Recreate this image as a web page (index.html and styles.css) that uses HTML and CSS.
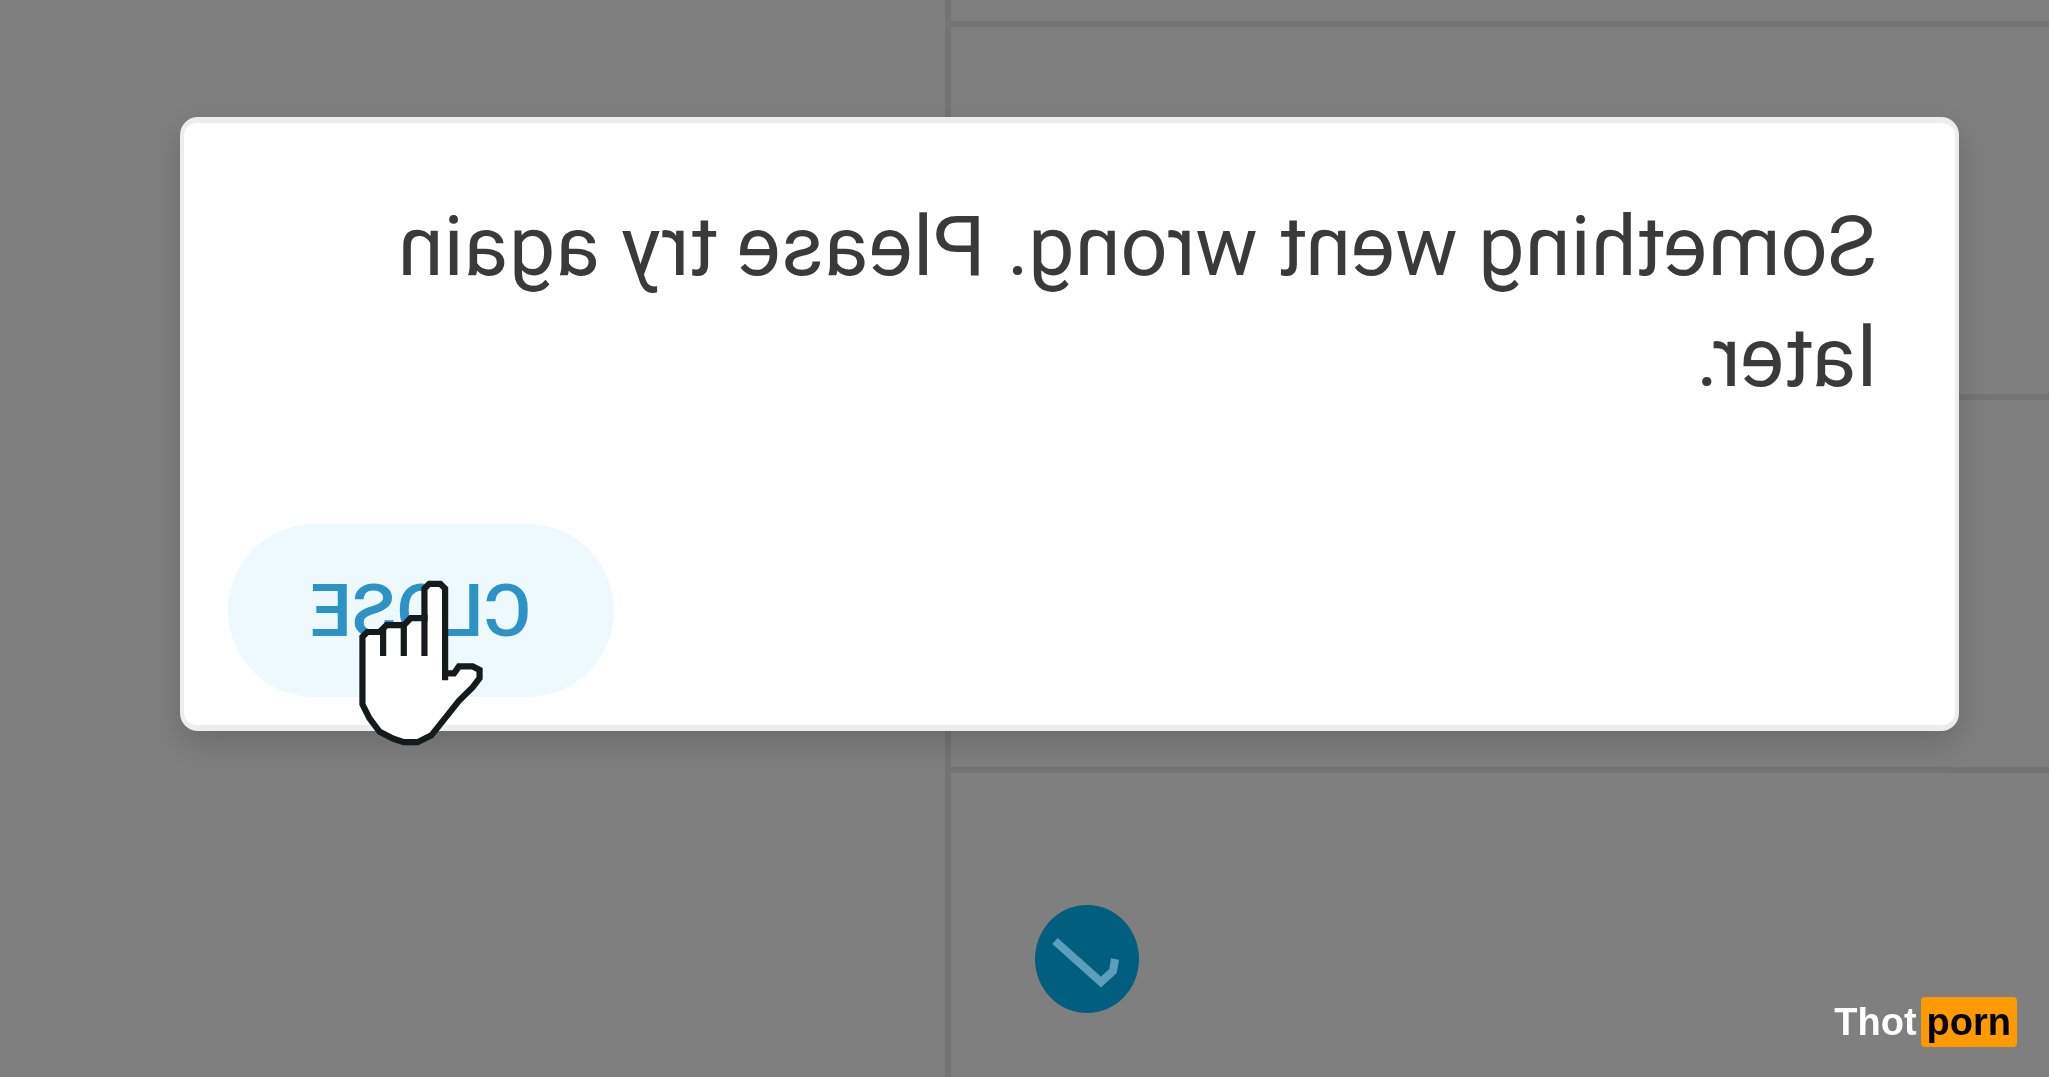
FILE: index.html
```html
<!DOCTYPE html>
<html lang="en">

<head>
    <meta charset="UTF-8">
    <meta name="viewport" content="width=device-width, initial-scale=1.0">
    <title>Something went wrong</title>
    <link rel="stylesheet" href="styles.css">
</head>

<body>

    <div class="screen">
        <main class="rows">
            <div class="row row-first"></div>
            <div class="row"></div>
            <div class="row"></div>
            <div class="row row-last">
                <svg class="check" viewBox="0 0 104 108" aria-hidden="true">
                    <ellipse cx="52" cy="54" rx="52" ry="54" fill="#005f7e" />
                    <path d="M24 54 L26 66 L38 77 L84 36" fill="none" stroke="#5c9ebc" stroke-width="8" />
                </svg>
            </div>
        </main>
        <aside class="side"></aside>

        <div class="overlay">
            <div class="dialog" role="alertdialog" aria-labelledby="message">
                <p class="message" id="message">Something went wrong. Please try again later.</p>
                <div class="actions">
                    <button class="close-btn" type="button">CLOSE</button>
                    <svg class="cursor" viewBox="0 0 18 24" aria-hidden="true">
                        <path d="M5.5 14.5 V1.2 L6.2 .5 H7.8 L8.5 1.2 V5.5 H10.5 L11.5 6.5 H14 L15 7.5 H16.8 L17.5 8.2 V18 L16.5 20 L15 22 L13 23 L11.5 23.5 H9.5 L7.5 22.5 L5.5 20 L3.5 17.5 L1.5 15.5 L.5 14.2 V13 L1.5 12.5 H3.5 L4.2 13.5 H5.5" fill="#fff" stroke="#151a1d" stroke-width=".9" />
                        <path d="M8.5 5 V11 M11.5 6.5 V11 M14.5 7 V11" fill="none" stroke="#151a1d" stroke-width=".9" />
                    </svg>
                </div>
            </div>
        </div>
    </div>

    <div class="watermark">Thot<span class="tag">porn</span></div>

</body>

</html>
```

FILE: styles.css
```css
* {
    box-sizing: border-box;
    margin: 0;
    padding: 0;
}

body {
    min-height: 100vh;
    background-color: #7f7f7f;
    font-family: Roboto, Arial, sans-serif;
}

/* the whole view is shown mirrored */
.screen {
    position: relative;
    display: flex;
    min-height: 100vh;
    transform: scaleX(-1);
}

.rows {
    display: flex;
    flex-direction: column;
    width: 53.9%;
    border-right: 6px solid #747474;
}

.side {
    flex: 1;
}

.row {
    height: 373px;
    border-bottom: 6px solid #747474;
}

.row-first {
    height: 27px;
}

.row-last {
    display: flex;
    flex: 1;
    justify-content: flex-end;
    align-items: flex-start;
    padding: 132px 84px 0 0;
    border-bottom: none;
}

.check {
    width: 104px;
    height: 108px;
}

.overlay {
    position: absolute;
    inset: 0;
    padding: 117px 180px 0 90px;
}

.dialog {
    padding: 68px 44px 28px 78px;
    background-color: #fff;
    border: 4px solid #ededed;
    border-width: 6px 4px;
    border-radius: 18px;
    box-shadow: 0 12px 30px rgba(0, 0, 0, 0.16);
}

.message {
    margin-bottom: 111px;
    padding-right: 80px;
    font-size: 83px;
    line-height: 111px;
    color: #3a3a3a;
}

.actions {
    position: relative;
    display: flex;
    justify-content: flex-end;
}

.close-btn {
    width: 386px;
    height: 173px;
    border: none;
    border-radius: 87px;
    background-color: #edf9fd;
    font-family: inherit;
    font-size: 73px;
    font-weight: 500;
    color: #2c93c4;
    cursor: pointer;
}

.cursor {
    position: absolute;
    top: 56px;
    right: 131px;
    width: 124px;
    height: 166px;
}

.watermark {
    position: absolute;
    right: 32px;
    bottom: 30px;
    display: flex;
    align-items: center;
    gap: 4px;
    font-family: "Liberation Sans", Arial, sans-serif;
    font-size: 38px;
    font-weight: bold;
    line-height: 50px;
    color: #fff;
}

.tag {
    padding: 0 6px;
    border-radius: 4px;
    background-color: #ff9900;
    color: #000;
}
```
